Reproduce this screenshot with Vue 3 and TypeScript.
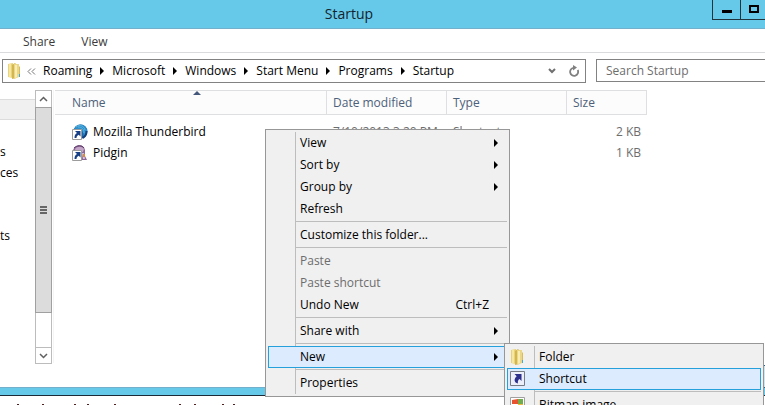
<script setup lang="ts">
import { ref } from 'vue'

interface FileRow { name: string; kind: 'bird' | 'pidgin'; date: string; type: string; size: string }
interface MenuEntry { label?: string; shortcut?: string; sub?: boolean; disabled?: boolean; active?: boolean }

const crumbs = ['Roaming', 'Microsoft', 'Windows', 'Start Menu', 'Programs', 'Startup']
const columns = ['Name', 'Date modified', 'Type', 'Size']
const search = ref('')

const files: FileRow[] = [
  { name: 'Mozilla Thunderbird', kind: 'bird', date: '7/10/2013 3:20 PM', type: 'Shortcut', size: '2 KB' },
  { name: 'Pidgin', kind: 'pidgin', date: '', type: '', size: '1 KB' },
]

const menu: MenuEntry[] = [
  { label: 'View', sub: true },
  { label: 'Sort by', sub: true },
  { label: 'Group by', sub: true },
  { label: 'Refresh' },
  {},
  { label: 'Customize this folder...' },
  {},
  { label: 'Paste', disabled: true },
  { label: 'Paste shortcut', disabled: true },
  { label: 'Undo New', shortcut: 'Ctrl+Z' },
  {},
  { label: 'Share with', sub: true },
  {},
  { label: 'New', sub: true, active: true },
  {},
  { label: 'Properties' },
]

// Ascender tips of the line that runs under the window
const tips = [17, 42, 74, 87, 114, 179, 194, 222, 233]
</script>

<template>
  <div class="desktop">
    <main class="window">
      <header class="titlebar">
        <h1>Startup</h1>
        <div class="controls">
          <button type="button" aria-label="Minimize">
            <svg width="10" height="10" viewBox="0 0 10 10"><path d="M0 5h10v3H0z" /></svg>
          </button>
          <button type="button" aria-label="Maximize">
            <svg width="10" height="10" viewBox="0 0 10 10"><path d="M0 0h10v8H0zM2 2v4h6V2z" fill-rule="evenodd" /></svg>
          </button>
        </div>
      </header>

      <nav class="ribbon">
        <button type="button">Share</button>
        <button type="button">View</button>
      </nav>

      <div class="toolbar">
        <div class="address">
          <svg class="folder" width="16" height="16" viewBox="0 0 16 16">
            <path d="M1 1l5-1v15l-5-1z" fill="#e9d27a" />
            <path d="M2 1l2-.5v14L2 14z" fill="#f6e8a0" />
            <path d="M5 2l3-2 1 1v14l-4 1z" fill="#d3b64e" />
            <path d="M7 1h5v13l-5 2z" fill="#ecd786" />
            <path d="M8 2h2v12l-2 1z" fill="#f8edb4" />
            <path d="M12 3l1 1v10h-1z" fill="#d8bd5c" />
            <path d="M12 11h1v3h-1z" fill="#41a5de" />
          </svg>
          <svg class="back" width="9" height="7" viewBox="0 0 9 7"><path d="M4 .5L1 3.500l3 3M8 .5L5 3.500l3 3" /></svg>
          <ol>
            <li v-for="(crumb, i) in crumbs" :key="crumb">
              <a href="#">{{ crumb }}</a>
              <svg v-if="i < crumbs.length - 1" width="4" height="8" viewBox="0 0 4 8"><path d="M0 0l4 4-4 4z" /></svg>
            </li>
          </ol>
          <button type="button" aria-label="Previous locations">
            <svg width="8" height="6" viewBox="0 0 8 6"><path d="M1 1l3 3 3-3" fill="none" stroke="#707070" stroke-width="2" /></svg>
          </button>
          <button type="button" aria-label="Refresh">
            <svg width="12" height="12" viewBox="0 0 12 12">
              <path d="M9.700 5A4 4 0 1 1 6 2.800" fill="none" stroke="#808080" stroke-width="1.800" />
              <path d="M5 0l4 2.500L5 5.500z" fill="#808080" />
            </svg>
          </button>
        </div>
        <input v-model="search" type="search" aria-label="Search Startup" placeholder="Search Startup">
      </div>

      <div class="body">
        <aside>
          <ul>
            <li class="selected"></li>
            <li></li>
            <li>s</li>
            <li>ces</li>
            <li></li>
            <li></li>
            <li>ts</li>
          </ul>
        </aside>
        <div class="scrollbar">
          <button type="button" aria-label="Scroll up">
            <svg width="9" height="6" viewBox="0 0 9 6"><path d="M1 5l3.500-3.500L8 5" /></svg>
          </button>
          <div class="thumb"><i></i><i></i><i></i></div>
          <div class="track"></div>
          <button type="button" aria-label="Scroll down">
            <svg width="9" height="6" viewBox="0 0 9 6"><path d="M1 1l3.500 3.500L8 1" /></svg>
          </button>
        </div>
        <section class="list">
          <table>
            <colgroup><col class="c-name"><col class="c-mid"><col class="c-mid"><col class="c-size"></colgroup>
            <thead>
              <tr>
                <th v-for="(column, i) in columns" :key="column" scope="col">
                  {{ column }}
                  <svg v-if="i === 0" class="sorted" width="8" height="4" viewBox="0 0 8 4"><path d="M4 0l4 4H0z" /></svg>
                </th>
              </tr>
            </thead>
            <tbody>
              <tr v-for="file in files" :key="file.name">
                <td>
                  <span class="file">
                    <svg width="16" height="16" viewBox="0 0 16 16">
                      <template v-if="file.kind === 'bird'">
                        <circle cx="8.500" cy="7.500" r="7" fill="#1d67a8" />
                        <path d="M2 5C5-1 13-1 15 6c0 5-2 7-4 8 2-6-1-9-9-9z" fill="#2d8fcb" />
                        <path d="M4 3c4-3 8-1 9 3M6 3c4 0 6 2 6 6" fill="none" stroke="#5fb4de" />
                        <path d="M14.500 7c0 4-2 6-4 7" fill="none" stroke="#143f7b" stroke-width="2" />
                      </template>
                      <template v-else>
                        <path d="M1 6c1-7 11-8 12-1l0 6 2 4h-5L3 9z" fill="#8d6795" />
                        <path d="M3 4c2-3 7-3 9 0l-1 3H4z" fill="#c4a6c9" />
                        <path d="M2 3c3-3 8-3 10 0" fill="none" stroke="#5d3c68" />
                        <path d="M10 8h2l1 6h-2z" fill="#d7c0d8" />
                        <path d="M11 9h2v3h-2z" fill="#dd8c36" />
                      </template>
                      <path d="M.5 5.500h9v10h-9z" fill="#fff" stroke="#9c9c9c" />
                      <path d="M3 7h5.500v5.500L6.700 10.700C5 11.500 4.500 12.500 4.500 14H2.500c0-3 1-4 2.500-5z" fill="#173f87" />
                    </svg>
                    {{ file.name }}
                  </span>
                </td>
                <td>{{ file.date }}</td>
                <td>{{ file.type }}</td>
                <td class="size">{{ file.size }}</td>
              </tr>
            </tbody>
          </table>
        </section>
      </div>
    </main>

    <svg class="tips" width="100%" height="2">
      <rect v-for="x in tips" :key="x" :x="x" y="0" width="2" height="1" />
    </svg>

    <div class="edge"></div>

    <div class="menu context" role="menu">
      <template v-for="(entry, i) in menu" :key="i">
        <button
          v-if="entry.label" type="button" role="menuitem" :disabled="entry.disabled"
          :class="{ active: entry.active }"
        >
          <span class="label">{{ entry.label }}</span>
          <span v-if="entry.shortcut" class="keys">{{ entry.shortcut }}</span>
          <svg v-if="entry.sub" class="arrow" width="4" height="8" viewBox="0 0 4 8"><path d="M0 0l4 4-4 4z" /></svg>
        </button>
        <hr v-else>
      </template>
    </div>

    <div class="menu submenu" role="menu">
      <button type="button" role="menuitem">
        <svg class="icon" width="16" height="16" viewBox="0 0 16 16">
          <path d="M1 1l5-1v15l-5-1z" fill="#e9d27a" />
          <path d="M2 1l2-.5v14L2 14z" fill="#f6e8a0" />
          <path d="M5 2l3-2 1 1v14l-4 1z" fill="#d3b64e" />
          <path d="M7 1h5v13l-5 2z" fill="#ecd786" />
          <path d="M8 2h2v12l-2 1z" fill="#f8edb4" />
          <path d="M12 3l1 1v10h-1z" fill="#d8bd5c" />
          <path d="M12 11h1v3h-1z" fill="#41a5de" />
        </svg>
        <span class="label">Folder</span>
      </button>
      <button type="button" role="menuitem" class="active">
        <svg class="icon" width="16" height="16" viewBox="0 0 16 16">
          <path d="M.5.500h14v14H.5z" fill="#eceffa" stroke="#777b85" />
          <path d="M4.500 3h7v7L9.500 8C8 9 7.500 10.500 8 12.500 4 11.500 3.500 8 6.700 5.200z" fill="#2c2f8c" />
        </svg>
        <span class="label">Shortcut</span>
      </button>
      <hr>
      <button type="button" role="menuitem">
        <svg class="icon" width="16" height="16" viewBox="0 0 16 16">
          <path d="M.5.500h14v15H.5z" fill="#fff" stroke="#a0a0a0" />
          <path d="M2 3l6-1v5H2z" fill="#e8532f" />
          <path d="M8 2h5v5H8z" fill="#6fae4a" />
          <path d="M2 8h6v5H2z" fill="#3d7fd0" />
          <path d="M8 7h5v6H8z" fill="#f0b93a" />
        </svg>
        <span class="label">Bitmap image</span>
      </button>
    </div>
  </div>
</template>

<style>
body { overflow: hidden; background: #fff; }
</style>

<style scoped>
* { box-sizing: border-box; }
.desktop {
  position: relative;
  height: 100vh;
  overflow: hidden;
  display: flex;
  flex-direction: column;
  font: 12px/16px "Open Sans", "Noto Sans", sans-serif;
  color: #000;
}
button { font: inherit; color: inherit; background: none; border: 0; padding: 0; margin: 0; }
svg { display: block; flex: none; }
.window {
  flex: 1;
  min-height: 0;
  display: flex;
  flex-direction: column;
  border-bottom: 1px solid #1c2a38;
}
.window::after { content: ""; height: 7px; flex: none; background: #66c9ea; border-top: 1px solid #73b0cc; }
.titlebar {
  height: 29px;
  flex: none;
  display: flex;
  align-items: center;
  background: #66c9ea;
  border-bottom: 1px solid #73b0cc;
}
h1 { flex: 1; margin: 0; padding-right: 14px; text-align: center; font-size: 14px; font-weight: 400; line-height: 20px; color: #14242c; }
.controls { align-self: flex-start; display: flex; width: 53px; height: 20px; overflow: hidden; }
.controls button { flex: none; width: 28px; padding-top: 5px; border: solid #20343d; border-width: 0 0 1px 1px; display: flex; align-items: flex-start; justify-content: center; }
.controls button + button { width: 27px; }
.ribbon { flex: none; height: 24px; padding: 2px 23px 0; display: flex; gap: 26px; border-bottom: 1px solid #dadbdc; color: #3b3b3b; }
.toolbar { flex: none; display: flex; gap: 10px; padding: 6px 0 7px 2px; }
.address { flex: 1; display: flex; align-items: center; height: 24px; border: 1px solid #828282; padding-left: 4px; }
.back { margin-left: 4px; fill: none; stroke: #777; }
ol, ul { list-style: none; margin: 0; padding: 0; }
ol { flex: 1; display: flex; gap: 8px; padding-left: 7px; }
li { display: flex; align-items: center; gap: 8px; white-space: nowrap; }
a { color: inherit; text-decoration: none; }
.address button { width: 22px; display: flex; justify-content: center; }
.toolbar input {
  flex: 0 0 169px;
  min-width: 0;
  height: 23px;
  border: solid #828282;
  border-width: 1px 0 1px 1px;
  border-radius: 0;
  padding: 0 9px;
  font: inherit;
  appearance: none;
  background: #fff;
}
.toolbar input::placeholder { color: #6d6d6d; opacity: 1; }
.body { flex: 1; min-height: 0; display: flex; }
aside { width: 35px; padding-top: 9px; }
aside li { height: 21px; padding-bottom: 1px; }
aside .selected { background: #f0f0f0; border: solid #dcdcdc; border-width: 1px 0; }
aside li:nth-child(2) { height: 22px; }
.scrollbar { width: 17px; display: flex; flex-direction: column; border: 1px solid #bcbcbc; margin-bottom: 23px; }
.scrollbar button { height: 16px; flex: none; display: flex; align-items: center; justify-content: center; }
.scrollbar button:last-child { border-top: 1px solid #bcbcbc; }
.scrollbar path { fill: none; stroke: #606060; stroke-width: 1.5; }
.thumb {
  flex: 207;
  margin: 0 -1px;
  border: 1px solid #a0a0a0;
  background: #dcdcdc;
  display: flex;
  flex-direction: column;
  align-items: center;
  justify-content: center;
  gap: 1px;
}
.thumb i { width: 7px; height: 2px; background: #666; }
.track { flex: 34; }
.list { flex: 1; margin: 0 0 24px 1px; border-left: 1px solid #f5f5f5; padding-left: 1px; }
table { border-collapse: separate; border-spacing: 0; table-layout: fixed; width: 592px; }
.c-name { width: 272px; }
.c-mid { width: 120px; }
.c-size { width: 80px; }
th {
  position: relative;
  height: 25px;
  padding: 0 6px;
  text-align: left;
  font-weight: 400;
  color: #4c607a;
  background: #fcfcfc;
  border: solid #dedfe1;
  border-width: 1px 1px 1px 0;
}
th:first-child { padding-left: 17px; }
.sorted { position: absolute; top: 0; left: 50%; margin-left: 2px; fill: #44587c; }
td { height: 21px; padding: 0 6px; color: #6d6d6d; white-space: nowrap; }
td:first-child { color: #000; padding-left: 17px; }
td.size { text-align: right; }
tbody::before { content: ""; display: block; height: 6px; }
.file { display: flex; align-items: center; gap: 5px; }
.tips { height: 9px; padding-top: 8px; fill: #502020; }
.edge {
  position: absolute;
  right: 0;
  bottom: 17px;
  width: 1px;
  height: 23px;
  background: #cfe6ee;
  border: solid #35607c;
  border-width: 1px 0;
}
.menu { position: absolute; padding: 2px; background: #f0f0f0; border: 1px solid #979797; }
.context { left: 265px; top: 129px; width: 245px; }
.submenu { left: 504px; top: 343px; width: 260px; }
.menu::before { content: ""; position: absolute; left: 29px; top: 2px; bottom: 2px; width: 1px; background: #bdbdbd; }
.menu button {
  position: relative;
  display: flex;
  align-items: center;
  width: 100%;
  height: 22px;
  padding: 0 8px 0 31px;
  border: 1px solid transparent;
}
.submenu button { padding-left: 2px; }
.submenu .label { padding-left: 13px; }
.menu button:disabled { color: #6d6d6d; }
.menu .active { background: #dcebfd; border-color: #26a0da; }
.label { flex: 1; text-align: left; white-space: nowrap; }
.keys { margin-right: 9px; }
.menu hr { height: 4px; margin: 0 0 0 28px; border: 0; background: linear-gradient(#bdbdbd, #bdbdbd) 0 1px / 100% 1px no-repeat; }
</style>
